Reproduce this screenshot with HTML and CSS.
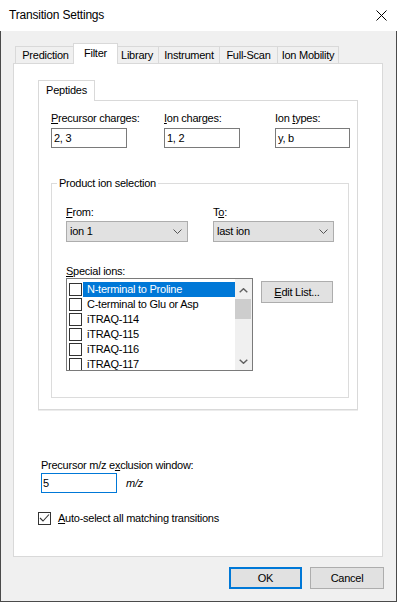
FILE: index.html
```html
<!DOCTYPE html>
<html>
<head>
<meta charset="utf-8">
<link rel="stylesheet" href="styles.css">
</head>
<body>
<div class="window">
  <div class="titlebar">
    <span class="title">Transition Settings</span>
    <svg class="close" width="11" height="11" viewBox="0 0 11 11"><path d="M0.5 0.5 L10.5 10.5 M10.5 0.5 L0.5 10.5" stroke="#000" stroke-width="1" fill="none"/></svg>
  </div>
  <div class="client">
    <div class="tabstrip">
      <div class="tab t-pred">Prediction</div>
      <div class="tab t-filter selected">Filter</div>
      <div class="tab t-lib">Library</div>
      <div class="tab t-inst">Instrument</div>
      <div class="tab t-full">Full-Scan</div>
      <div class="tab t-ion">Ion Mobility</div>
    </div>
    <div class="panel">
      <div class="tabstrip inner">
        <div class="tab t-pep selected">Peptides</div>
      </div>
      <div class="inner-panel">
        <div class="fields">
          <div class="field">
            <div class="label"><u>P</u>recursor charges:</div>
            <div class="textbox">2, 3</div>
          </div>
          <div class="field">
            <div class="label"><u>I</u>on charges:</div>
            <div class="textbox">1, 2</div>
          </div>
          <div class="field">
            <div class="label">Ion <u>t</u>ypes:</div>
            <div class="textbox narrow">y, b</div>
          </div>
        </div>
        <fieldset class="group">
          <legend>Product ion selection</legend>
          <div class="group-body">
            <div class="range">
              <div class="field">
                <div class="label"><u>F</u>rom:</div>
                <div class="combo wide"><span>ion 1</span><svg width="9" height="5" viewBox="0 0 9 5"><polyline points="0.5,0.5 4.5,4.5 8.5,0.5" fill="none" stroke="#555" stroke-width="1"/></svg></div>
              </div>
              <div class="field">
                <div class="label">T<u>o</u>:</div>
                <div class="combo"><span>last ion</span><svg width="9" height="5" viewBox="0 0 9 5"><polyline points="0.5,0.5 4.5,4.5 8.5,0.5" fill="none" stroke="#555" stroke-width="1"/></svg></div>
              </div>
            </div>
            <div class="label special-label"><u>S</u>pecial ions:</div>
            <div class="special-row">
              <div class="listbox">
                <div class="items">
                  <div class="item selected"><span class="box"></span><span class="text">N-terminal to Proline</span></div>
                  <div class="item"><span class="box"></span><span class="text">C-terminal to Glu or Asp</span></div>
                  <div class="item"><span class="box"></span><span class="text">iTRAQ-114</span></div>
                  <div class="item"><span class="box"></span><span class="text">iTRAQ-115</span></div>
                  <div class="item"><span class="box"></span><span class="text">iTRAQ-116</span></div>
                  <div class="item"><span class="box"></span><span class="text">iTRAQ-117</span></div>
                </div>
                <div class="scrollbar">
                  <div class="sb-btn"><svg width="9" height="5" viewBox="0 0 9 5"><polyline points="0.7,4.3 4.5,0.7 8.3,4.3" fill="none" stroke="#606060" stroke-width="1.4"/></svg></div>
                  <div class="sb-track"><div class="sb-thumb"></div></div>
                  <div class="sb-btn"><svg width="9" height="5" viewBox="0 0 9 5"><polyline points="0.7,0.7 4.5,4.3 8.3,0.7" fill="none" stroke="#606060" stroke-width="1.4"/></svg></div>
                </div>
              </div>
              <div class="button edit"><u>E</u>dit List...</div>
            </div>
          </div>
        </fieldset>
      </div>
      <div class="exclusion">
        <div class="label">Precursor m/z e<u>x</u>clusion window:</div>
        <div class="ex-row">
          <div class="textbox focused">5</div>
          <span class="unit">m/z</span>
        </div>
      </div>
      <div class="checkrow">
        <span class="checkbox"><svg width="11" height="11" viewBox="0 0 11 11"><polyline points="1,5 4,8 10,1.5" fill="none" stroke="#333" stroke-width="1.1"/></svg></span>
        <span><u>A</u>uto-select all matching transitions</span>
      </div>
    </div>
    <div class="buttons">
      <div class="button ok">OK</div>
      <div class="button cancel">Cancel</div>
    </div>
  </div>
</div>
</body>
</html>
```
FILE: styles.css
```css
* { box-sizing: border-box; }
html, body { margin: 0; padding: 0; }
body {
  font-family: "Liberation Sans", Arial, sans-serif;
  font-size: 11px;
  letter-spacing: -0.25px;
  color: #000;
  background: #f0f0f0;
}
u { text-decoration: underline; text-underline-offset: 1px; }

.window {
  width: 397px;
  height: 602px;
  display: flex;
  flex-direction: column;
  background: #f0f0f0;
}

.titlebar {
  height: 31px;
  flex: none;
  background: #fff;
  display: flex;
  align-items: center;
  justify-content: space-between;
  padding: 0 10px 0 9px;
}
.title {
  font-size: 12px;
  letter-spacing: -0.2px;
  line-height: 31px;
}
.close { display: block; }

.client {
  flex: 1;
  border: 1px solid #4a4a4a;
  border-top: none;
  padding: 12px 13px 12px 12px;
  display: flex;
  flex-direction: column;
}

/* tabs */
.tabstrip {
  height: 20px;
  flex: none;
  display: flex;
  align-items: flex-end;
  padding-left: 2px;
}
.tab {
  height: 17px;
  border: 1px solid #d9d9d9;
  border-bottom: none;
  margin-right: -1px;
  background: #f0f0f0;
  text-align: center;
  line-height: 16px;
  white-space: nowrap;
}
.tab.selected {
  position: relative;
  z-index: 2;
  height: 21px;
  margin-bottom: -1px;
  margin-left: -2px;
  margin-right: -3px;
  background: #fff;
  line-height: 18px;
}
.t-pred { width: 61px; }
.t-filter { width: 45px; }
.t-lib { width: 44px; }
.t-inst { width: 62px; }
.t-full { width: 59px; }
.t-ion { width: 62px; }
.t-pep { width: 57px; }

.panel {
  height: 494px;
  flex: none;
  border: 1px solid #d9d9d9;
  background: #fff;
  padding: 16px 24px 0 24px;
}

.inner-panel {
  height: 310px;
  border: 1px solid #d9d9d9;
  box-shadow: 0 1px 0 #ececec;
  padding: 10px 0 0 12px;
}

.label { line-height: 14px; white-space: nowrap; }
.field .label { margin-bottom: 3px; }

.fields {
  display: grid;
  grid-template-columns: 113px 111px 76px;
}
.textbox {
  width: 76px;
  height: 20px;
  border: 1px solid #7a7a7a;
  background: #fff;
  line-height: 18px;
  padding-left: 2px;
}
.textbox.narrow { width: 75px; }
.textbox.focused { border-color: #0078d7; padding-left: 1px; }

/* group box */
.group {
  margin: 28px 0 0 0;
  width: 298px;
  border: 1px solid #dcdcdc;
  padding: 14px 0 26px 5px;
}
.group legend {
  padding: 0 2px;
  line-height: 15px;
}
.group-body { padding-left: 9px; }

.range {
  display: grid;
  grid-template-columns: 147px 121px;
}
.range .field .label { margin-bottom: 2px; }
.combo {
  width: 121px;
  height: 21px;
  border: 1px solid #adadad;
  background: #e1e1e1;
  display: flex;
  align-items: center;
  justify-content: space-between;
  padding: 0 5px 0 3px;
  line-height: 19px;
}
.combo.wide { width: 122px; }
.combo svg { display: block; }

.special-label { margin-top: 22px; }
.special-row {
  display: flex;
  align-items: flex-start;
  gap: 8px;
}
.listbox {
  width: 187px;
  height: 93px;
  border: 1px solid #7a7a7a;
  background: #fff;
  display: flex;
  overflow: hidden;
}
.items {
  flex: 1;
  padding-top: 3px;
  overflow: hidden;
}
.item {
  height: 15px;
  display: flex;
  align-items: flex-start;
}
.item .box {
  width: 13px;
  height: 13px;
  margin: 1px 1px 0 2px;
  border: 1px solid #333;
  background: #fff;
  flex: none;
}
.item .text {
  flex: 1;
  height: 15px;
  line-height: 15px;
  padding-left: 4px;
  white-space: nowrap;
}
.item.selected .text { background: #0078d7; color: #fff; }

.scrollbar {
  width: 17px;
  flex: none;
  background: #f0f0f0;
  padding-top: 3px;
  display: flex;
  flex-direction: column;
}
.sb-btn {
  height: 17px;
  display: flex;
  align-items: center;
  justify-content: center;
}
.sb-btn svg { display: block; }
.sb-track { flex: 1; }
.sb-thumb {
  height: 20px;
  margin: 0 1px 0 0;
  background: #cdcdcd;
}

.button {
  height: 22px;
  border: 1px solid #adadad;
  background: #e1e1e1;
  text-align: center;
  line-height: 20px;
}
.button.edit { width: 72px; margin-top: 3px; }

/* bottom section */
.exclusion { margin: 48px 0 0 3px; }
.exclusion .label { margin-bottom: 1px; }
.ex-row { display: flex; align-items: center; }
.unit { margin-left: 9px; font-style: italic; }

.checkrow {
  margin-top: 18px;
  height: 14px;
  display: flex;
  align-items: center;
  gap: 7px;
  line-height: 14px;
}
.checkbox {
  width: 13px;
  height: 13px;
  border: 1px solid #333;
  background: #fff;
  display: block;
  flex: none;
}
.checkbox svg { display: block; }

.buttons {
  margin: 10px -1px 0 0;
  display: flex;
  justify-content: flex-end;
  gap: 8px;
}
.button.ok {
  width: 73px;
  border: 2px solid #0078d7;
  line-height: 18px;
}
.button.cancel { width: 74px; }
```
